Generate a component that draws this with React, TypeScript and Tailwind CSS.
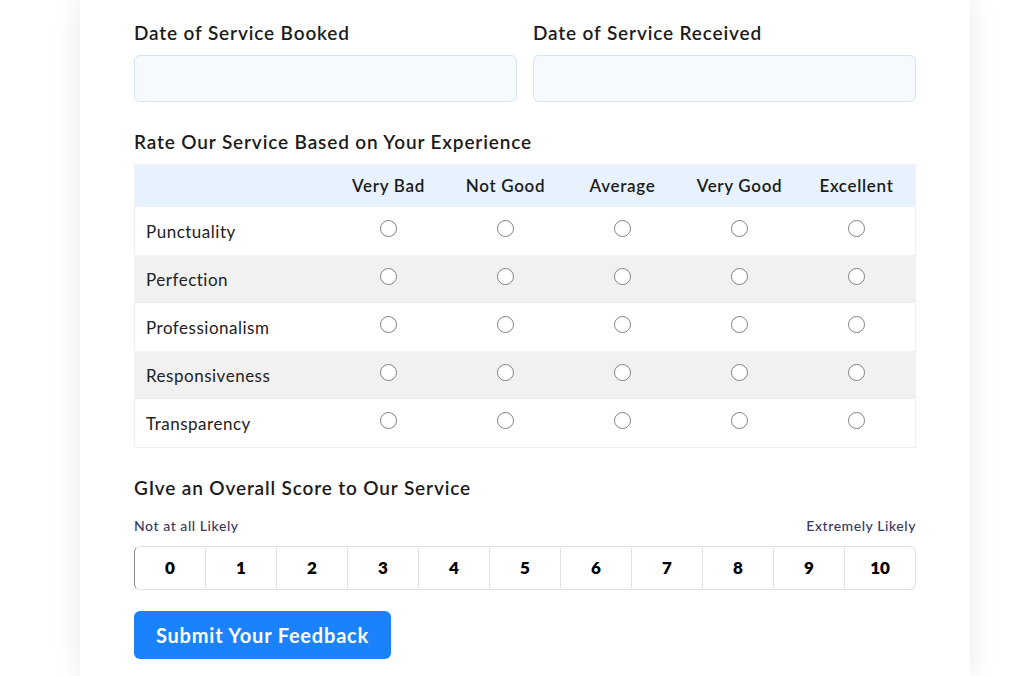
import React from "react";

const criteria = ["Punctuality", "Perfection", "Professionalism", "Responsiveness", "Transparency"];
const ratings = ["Very Bad", "Not Good", "Average", "Very Good", "Excellent"];
const scores = [0, 1, 2, 3, 4, 5, 6, 7, 8, 9, 10];

function Radio() {
  return <span className="block h-[17px] w-[17px] rounded-full border border-[#808080] bg-white" />;
}

export default function App() {
  return (
    <div
      className="h-[676px] w-full overflow-hidden bg-white"
      style={{ fontFamily: "Lato, 'Noto Sans', sans-serif" }}
    >
      <div className="mx-[80px] mr-[54px] h-full bg-white px-[54px] pt-[20px] shadow-[0_0_28px_rgba(0,0,0,0.09)]">
        {/* dates */}
        <div className="grid grid-cols-2 gap-4">
          {["Date of Service Booked", "Date of Service Received"].map((label) => (
            <div key={label}>
              <div className="text-[19px] font-semibold leading-[26px] tracking-[0.045em] text-[#1b1b1b]">{label}</div>
              <div className="mt-[9px] h-[47px] rounded-md border border-[#d3e4f4] bg-[#f6faff]" />
            </div>
          ))}
        </div>

        {/* rating table */}
        <div className="mt-[27px] text-[19px] font-semibold leading-[26px] tracking-[0.045em] text-[#1b1b1b]">
          Rate Our Service Based on Your Experience
        </div>
        <div className="mt-[9px] border border-[#f0f0f0] text-[#1b1b1b]">
          <div className="grid h-[42px] grid-cols-[195px_repeat(5,1fr)] items-center bg-[#e8f2fe] text-[17px] font-semibold tracking-[0.04em]">
            <div />
            {ratings.map((r) => (
              <div key={r} className="text-center">{r}</div>
            ))}
          </div>
          {criteria.map((c, i) => (
            <div
              key={c}
              className={`grid h-[48px] grid-cols-[195px_repeat(5,1fr)] items-center ${i % 2 === 1 ? "bg-[#f1f1f1]" : "bg-white"}`}
            >
              <div className="pl-[11px] pt-[2px] text-[17px] tracking-[0.03em] text-[#222]">{c}</div>
              {ratings.map((r) => (
                <div key={r} className="flex justify-center pb-[5px]">
                  <Radio />
                </div>
              ))}
            </div>
          ))}
        </div>

        {/* score */}
        <div className="mt-[27px] text-[19px] font-semibold leading-[26px] tracking-[0.045em] text-[#1b1b1b]">
          GIve an Overall Score to Our Service
        </div>
        <div className="mt-[16px] flex justify-between text-[14px] font-medium leading-[18px] tracking-[0.04em] text-[#3b3863]">
          <span>Not at all Likely</span>
          <span>Extremely Likely</span>
        </div>
        <div className="mt-[11px] flex h-[44px] overflow-hidden rounded-md border border-[#e2e2e2] border-l-[#8a8a8a]">
          {scores.map((s, i) => (
            <div
              key={s}
              className={`flex flex-1 items-center justify-center text-[17px] font-extrabold text-black ${i > 0 ? "border-l border-[#e2e2e2]" : ""}`}
            >
              {s}
            </div>
          ))}
        </div>

        <button className="mt-[21px] h-[48px] w-[257px] rounded-md bg-[#1a82fb] text-[20px] font-bold tracking-[0.04em] text-white">
          Submit Your Feedback
        </button>
      </div>
    </div>
  );
}
